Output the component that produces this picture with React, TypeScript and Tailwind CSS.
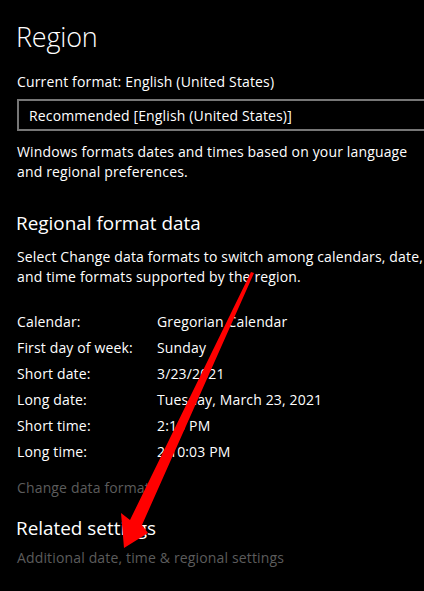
import React from "react";

const rows: [string, string][] = [
  ["Calendar:", "Gregorian Calendar"],
  ["First day of week:", "Sunday"],
  ["Short date:", "3/23/2021"],
  ["Long date:", "Tuesday, March 23, 2021"],
  ["Short time:", "2:10 PM"],
  ["Long time:", "2:10:03 PM"],
];

export default function App() {
  return (
    <div
      className="relative w-[424px] h-[591px] overflow-hidden bg-black text-white"
      style={{ fontFamily: '"Open Sans", "Noto Sans", sans-serif' }}
    >
      <div className="flex flex-col pl-[17px]">
        <h1 className="mt-[18px] text-[27px] font-light leading-[38px] -ml-[1px] tracking-[-0.2px]">Region</h1>
        <div className="mt-[16px] text-[14px] leading-[20px] tracking-[0.15px]">Current format: English (United States)</div>
        <div className="mt-[7px] h-[32px] border-2 border-[#767676] border-r-0 flex items-center pl-[10px] text-[14px] tracking-[0.15px] w-[420px]">
          Recommended [English (United States)]
        </div>
        <div className="mt-[11px] text-[14px] leading-[20px] tracking-[0.15px] w-[407px] whitespace-nowrap">
          Windows formats dates and times based on your language
          <br />
          and regional preferences.
        </div>
        <h2 className="mt-[27px] text-[18.9px] leading-[28px] -ml-[1px]">Regional format data</h2>
        <div className="mt-[10px] text-[14px] leading-[20px] tracking-[0.15px] whitespace-nowrap">
          Select Change data formats to switch among calendars, date,
          <br />
          and time formats supported by the region.
        </div>
        <div className="mt-[21px] flex flex-col">
          {rows.map(([k, v]) => (
            <div key={k} className="flex h-[26px] items-center text-[14px] tracking-[0.15px]">
              <div className="w-[140px]">{k}</div>
              <div>{v}</div>
            </div>
          ))}
        </div>
        <div className="mt-[14px] text-[14px] leading-[20px] text-[#5c5c5c] tracking-[0.15px]">Change data formats</div>
        <h2 className="mt-[16px] text-[18.9px] leading-[28px] -ml-[1px]">Related settings</h2>
        <div className="mt-[6px] text-[14px] leading-[20px] text-[#5c5c5c] tracking-[0.15px]">
          Additional date, time &amp; regional settings
        </div>
      </div>
      <svg className="absolute left-0 top-0 pointer-events-none" width="424" height="591" viewBox="0 0 424 591">
        <polygon
          points="251,272 254,273 142,525 148,533 124,548 121,513 130,520"
          fill="#ff0000"
        />
      </svg>
    </div>
  );
}
